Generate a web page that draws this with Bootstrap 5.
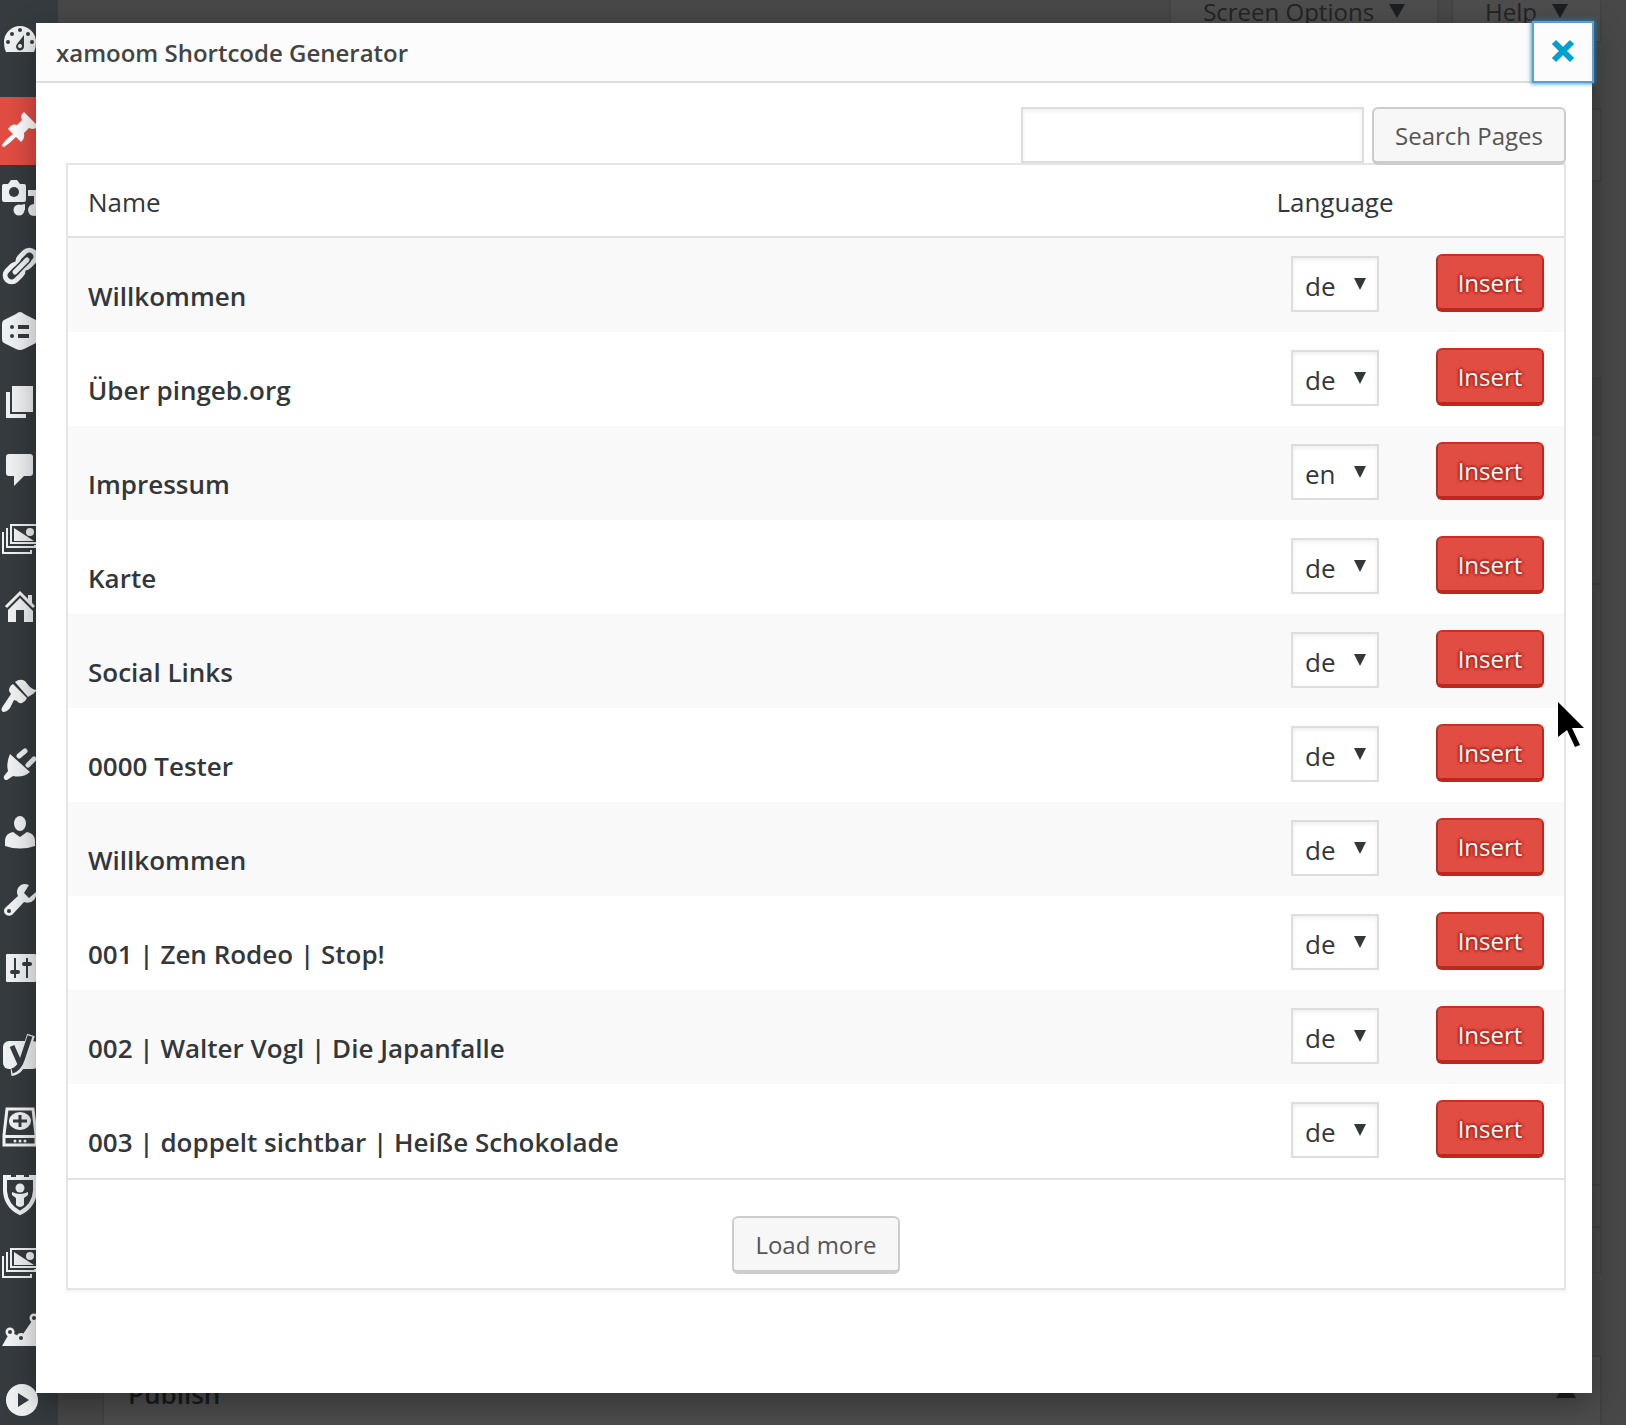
<!DOCTYPE html>
<html lang="en">
<head>
<meta charset="utf-8">
<meta name="viewport" content="width=device-width, initial-scale=1">
<title>xamoom Shortcode Generator</title>
<link href="https://cdn.jsdelivr.net/npm/bootstrap@5.3.0/dist/css/bootstrap.min.css" rel="stylesheet">
<style>
body{font-family:"Open Sans","Noto Sans",sans-serif;font-size:26px;line-height:36px;color:#32373c;background:#484848}
.app-shell{height:100vh}
/* admin menu */
.admin-menu{width:58px;background:#363b3f;padding-top:7px}
.menu-link{display:block;height:68px;padding:13px 0}
.menu-link.is-current{background:#e14d43}
.menu-link svg{display:block;width:40px;height:40px;overflow:visible;color:#f1f2f3;fill:currentColor}
.menu-link.is-current svg{color:#fff}
.menu-gap{margin-top:22px}
.cut{fill:#363b3f}
.ln{fill:none;stroke:currentColor}
.lncut{fill:none;stroke:#363b3f}
/* dimmed page */
.page-area{padding:0 24px 0 44px;color:#191b1d}
.meta-tab{height:43px;border:2px solid #444;border-top:0;background:#4d4d4d;color:#242424;font-size:24px;line-height:24px;padding:0 32px;display:flex;gap:15px;text-decoration:none}
.meta-tab svg{margin-top:4px}
.meta-links{gap:12px}
.dim-box{border:2px solid #434343;background:#4d4d4d}
.title-box{height:74px;margin-top:65px}
.editor-box{margin-top:195px;height:897px;background:#494949}
.editor-bar{height:57px;background:#454545}
.editor-tools{height:149px;border-bottom:2px solid #424242}
.editor-body{height:601px;border-bottom:2px solid #424242}
.editor-path{height:42px;border-bottom:2px solid #424242}
.publish-box{margin-top:81px;height:120px;padding:19px 24px}
.publish-box h2{font-size:26px;line-height:36px;font-weight:600}
/* dialog */
.dialog-pane{position:absolute;top:23px;left:36px;right:34px;background:#fff;box-shadow:0 10px 30px rgba(0,0,0,.35);padding-bottom:103px}
.dialog-head{height:60px;background:#fcfcfc;border-bottom:2px solid #ddd;padding-left:20px}
.dialog-head h1{font-size:24px;line-height:36px;font-weight:600;color:#444}
.close-btn{width:62px;height:62px;margin:-2px -2px 0 0;padding:0 0 2px;border:2px solid #5b9dd9;background:#fcfcfc;box-shadow:0 0 4px 1px rgba(30,140,190,.8)}
.close-btn svg{display:block;margin:0 auto}
.dialog-main{padding:24px 26px 0 30px}
.search-box{width:343px;height:56px;border:2px solid #ddd;border-radius:0;background:#fff;box-shadow:inset 0 2px 4px rgba(0,0,0,.07);padding:4px 10px;font-size:26px}
.wp-btn{height:58px;border:2px solid #ccc;border-bottom-width:4px;border-radius:6px;background:#f7f7f7;color:#555;font-size:24px;line-height:36px;padding:9px 21px 7px}
.insert-btn{width:108px;border-color:#d02c21 #ba281e #ba281e;background:#e14d43;color:#fff;padding:9px 0 7px;text-shadow:0 -2px 2px #ba281e,2px 0 2px #ba281e,0 2px 2px #ba281e,-2px 0 2px #ba281e}
.list-frame{border:2px solid #e5e5e5;box-shadow:0 2px 2px rgba(0,0,0,.04);margin-top:-2px}
.page-table{width:100%;table-layout:fixed;border-collapse:separate;border-spacing:0}
.page-table th{height:73px;padding:2px 20px 0;border-bottom:2px solid #e1e1e1;font-weight:400;vertical-align:middle}
.page-table td{height:94px;padding:16px 20px 0;vertical-align:top;font-weight:600}
.page-table td:first-child{padding-top:40px}
.page-table tbody tr:nth-child(odd){background:#f9f9f9}
.col-lang{width:160px}
.col-act{width:149px}
.lang-select{width:88px;height:56px;margin-top:2px;border:2px solid #ddd;appearance:none;color:#32373c;padding:4px 0 0 12px;font-size:26px;box-shadow:inset 0 2px 4px rgba(0,0,0,.07);background:#fff url("data:image/svg+xml,%3Csvg xmlns='http://www.w3.org/2000/svg' width='12' height='12'%3E%3Cpath d='M0 0h12L6 12z' fill='%2332373c'/%3E%3C/svg%3E") no-repeat right 11px top 20px}
.list-foot{border-top:2px solid #e1e1e1;padding:36px 0 14px}
.pointer-mark{position:absolute;right:6px;top:679px}
</style>
</head>
<body>
<div class="app-shell d-flex overflow-hidden position-relative">
<nav class="admin-menu flex-shrink-0" aria-label="Admin menu">
<a class="menu-link" href="#" aria-label="Dashboard"><svg viewBox="0 0 40 40"><path d="M4 22a16 16 0 0 1 32 0q0 6-2 10H6q-2-4-2-10z"/><g class="cut"><circle cx="20" cy="10" r="2"/><circle cx="12" cy="14" r="2"/><circle cx="28" cy="14" r="2"/><circle cx="8" cy="22" r="2"/><circle cx="32" cy="22" r="2"/><path d="M24 15v11a4 4 0 1 1-7-2z"/></g><circle cx="20" cy="26" r="2"/></svg></a>
<a class="menu-link is-current menu-gap" href="#" aria-label="Posts"><svg viewBox="0 0 40 40"><path d="M24 2q-3 2-3 5l1 3-5 5q-5-2-9 4l5 5Q5 30 2 35q0 2 2 2 6-4 12-10l5 5q4-3 3-9l5-5 3 1q4 0 6-3z"/></svg></a>
<a class="menu-link" href="#" aria-label="Media"><svg viewBox="0 0 40 40"><path d="M4 6h4l3-4h6l3 4h4q2 0 2 2v14q0 2-2 2H4q-2 0-2-2V8q0-2 2-2z"/><circle class="cut" cx="14" cy="14" r="5"/><path d="M28 12h14v20h-8V18h-6zM20 27l5-1v6h-5z"/><circle cx="19" cy="32" r="5.500"/><circle cx="34" cy="32" r="6"/></svg></a>
<a class="menu-link" href="#" aria-label="Links"><svg viewBox="0 0 40 40"><g class="ln"><rect stroke-width="5" x="4" y="20" width="20" height="13" rx="6.500" transform="rotate(-45 14.500 26.500)"/><rect stroke-width="5" x="17" y="7" width="20" height="13" rx="6.500" transform="rotate(-45 26.500 13.500)"/><path class="lncut" stroke-width="8" stroke-linecap="round" d="M15 26 27 14"/><path stroke-width="5" stroke-linecap="round" d="M15 26 27 14"/></g></svg></a>
<a class="menu-link" href="#" aria-label="Listings"><svg viewBox="0 0 40 40"><path d="M20-2q2 0 4 2l12 6q2 1 2 4v15q0 3-2 4l-12 6q-4 2-8 0L4 29q-2-1-2-4V10q0-3 2-4l12-6q2-2 4-2z"/><path class="cut" d="M18 11h11v4H18zM18 20h11v4H18z"/><circle class="cut" cx="12" cy="13" r="2"/><circle class="cut" cx="12" cy="22" r="2"/></svg></a>
<a class="menu-link" href="#" aria-label="Pages"><svg viewBox="0 0 40 40"><path d="M12 4h21v26H12zM6 10h4v22h16v4H6z"/></svg></a>
<a class="menu-link" href="#" aria-label="Comments"><svg viewBox="0 0 40 40"><path d="M9 4h21q3 0 3 3v16q0 3-3 3h-6L14 36V26H9q-3 0-3-3V7q0-3 3-3z"/></svg></a>
<a class="menu-link" href="#" aria-label="Gallery"><svg viewBox="0 0 40 40"><g id="gallery"><path class="ln" stroke-width="2" d="M11 7h28v18H11zM8 11H7v18h28v-2M4 15H3v20h28v-3"/><path d="M14 10 34 23H14z"/><circle cx="30" cy="14" r="4"/></g></svg></a>
<a class="menu-link" href="#" aria-label="Home"><svg viewBox="0 0 40 40"><path class="ln" stroke-width="3" d="M6 21 20 7l14 14"/><path d="M28 9h4v9l-4-4zM20 12l13 13v11h-9V24h-8v12H8V24z"/></svg></a>
<a class="menu-link menu-gap" href="#" aria-label="Appearance"><svg viewBox="0 0 40 40"><path d="M15 6q5-4 10-1l4 5q4 4 8 4-3 4-9 7zM13 8l14 14q-1 3-5 5-3 1-5-2l-3-1-4 8q-3 4-7 4-3-2 0-6l8-12-2-3q0-5 4-7z"/></svg></a>
<a class="menu-link" href="#" aria-label="Plugins"><svg viewBox="0 0 40 40"><path d="M10 10 30 28q-7 6-17 4l-6 4q-4 0-3-4l4-5q-2-8 2-17z"/><path class="ln" stroke-width="5" stroke-linecap="round" d="m19 12 6-5M28 21l6-6"/></svg></a>
<a class="menu-link" href="#" aria-label="Users"><svg viewBox="0 0 40 40"><ellipse cx="20" cy="11.500" rx="6" ry="7.500"/><path d="M5 34v-6q1-7 8-8l7 5 7-5q7 1 8 8v6q-15 5-30 0z"/></svg></a>
<a class="menu-link" href="#" aria-label="Tools"><svg viewBox="0 0 40 40"><path d="M29 5q-7-3-11 3-2 4 0 8L5 28q-2 3 0 6 3 3 7 1l12-13q6 2 10-2 3-4 2-8l-7 6-5-5z"/><circle class="cut" cx="9" cy="31" r="2"/></svg></a>
<a class="menu-link" href="#" aria-label="Settings"><svg viewBox="0 0 40 40"><rect x="6" y="6" width="30" height="28" rx="1"/><path class="lncut" stroke-width="2" d="M15 10v20M27 10v20"/><path class="lncut" stroke-width="4" stroke-linecap="round" d="M12 24h6M24 16h6"/></svg></a>
<a class="menu-link menu-gap" href="#" aria-label="SEO"><svg viewBox="0 0 40 40"><rect x="3" y="3" width="36" height="28" rx="6"/><path class="ln" stroke-width="8" d="M31-3 23 22q-3 11-12 12"/><path class="lncut" stroke-width="5" d="m12 8 8 18M30-2 22 22q-3 9-10 11"/></svg></a>
<a class="menu-link" href="#" aria-label="Backup"><svg viewBox="0 0 40 40"><path class="ln" stroke-width="3" d="M7 3h26l3 26v10H4V29z"/><path d="M4 29h32v3H4z"/><ellipse cx="20" cy="15" rx="11" ry="9"/><path class="lncut" stroke-width="3" d="M13 15h14M20 9v12"/><g><circle cx="15" cy="35" r="1.500"/><circle cx="20" cy="35" r="1.500"/><circle cx="25" cy="35" r="1.500"/></g></svg></a>
<a class="menu-link" href="#" aria-label="Security"><svg viewBox="0 0 40 40"><path class="ln" stroke-width="4" d="M5 3v14q1 15 15 22 14-7 15-22V3"/><path d="M3 1h8v2h5V1h8v2h5V1h8v5H3z"/><circle cx="20" cy="14" r="4.500"/><path d="M12 18q8 4 16 0v3l-4 3v7q-4 4-8 0v-7l-4-3z"/></svg></a>
<a class="menu-link" href="#" aria-label="Media gallery"><svg viewBox="0 0 40 40"><use href="#gallery"/></svg></a>
<a class="menu-link" href="#" aria-label="Statistics"><svg viewBox="0 0 40 40"><path d="m2 36 8-14 11 5 13-19 6 10v18z"/><circle cx="10" cy="22" r="4.500"/><circle cx="21" cy="27" r="4"/><circle cx="34" cy="8" r="4.500"/><g class="cut"><circle cx="10" cy="22" r="2"/><circle cx="21" cy="28" r="2"/><circle cx="34" cy="8" r="2"/></g></svg></a>
<a class="menu-link" href="#" aria-label="Collapse menu"><svg viewBox="0 0 40 40"><circle cx="22" cy="22" r="16"/><path class="cut" d="m18 15 11 7-11 7z"/></svg></a>
</nav>
<main class="page-area flex-grow-1">
<div class="meta-links d-flex justify-content-end">
<a class="meta-tab" href="#">Screen Options <svg width="16" height="14"><path d="M0 0h16L8 14z" fill="#1c1e20"/></svg></a>
<a class="meta-tab" href="#">Help <svg width="16" height="14"><path d="M0 0h16L8 14z" fill="#1c1e20"/></svg></a>
</div>
<div class="dim-box title-box"></div>
<div class="dim-box editor-box"><div class="editor-bar"></div><div class="editor-tools"></div><div class="editor-body"></div><div class="editor-path"></div></div>
<section class="dim-box publish-box d-flex justify-content-between"><h2 class="m-0">Publish</h2><svg width="20" height="22"><path d="M10 6 20 22H0z" fill="#1c1e20"/></svg></section>
</main>
<section class="dialog-pane" role="dialog" aria-labelledby="dialogTitle">
<header class="dialog-head d-flex justify-content-between">
<h1 class="m-0 pt-2 mt-1" id="dialogTitle">xamoom Shortcode Generator</h1>
<button class="close-btn" type="button" aria-label="Close"><svg width="24" height="24"><path d="m3 3 18 18M21 3 3 21" stroke="#00a0d2" stroke-width="6" fill="none"/></svg></button>
</header>
<div class="dialog-main">
<form class="d-flex justify-content-end gap-2 position-relative"><input class="search-box" type="search" aria-label="Search pages"><button class="wp-btn" type="button">Search Pages</button></form>
<div class="list-frame">
<table class="page-table">
<thead><tr><th scope="col">Name</th><th class="col-lang text-center" scope="col">Language</th><th class="col-act" aria-label="Action"></th></tr></thead>
<tbody>
<tr><td>Willkommen</td><td class="text-center"><select class="lang-select" aria-label="Language"><option>de</option><option>en</option></select></td><td class="text-end"><button class="wp-btn insert-btn" type="button">Insert</button></td></tr>
<tr><td>Über pingeb.org</td><td class="text-center"><select class="lang-select" aria-label="Language"><option>de</option><option>en</option></select></td><td class="text-end"><button class="wp-btn insert-btn" type="button">Insert</button></td></tr>
<tr><td>Impressum</td><td class="text-center"><select class="lang-select" aria-label="Language"><option>en</option><option>de</option></select></td><td class="text-end"><button class="wp-btn insert-btn" type="button">Insert</button></td></tr>
<tr><td>Karte</td><td class="text-center"><select class="lang-select" aria-label="Language"><option>de</option><option>en</option></select></td><td class="text-end"><button class="wp-btn insert-btn" type="button">Insert</button></td></tr>
<tr><td>Social Links</td><td class="text-center"><select class="lang-select" aria-label="Language"><option>de</option><option>en</option></select></td><td class="text-end"><button class="wp-btn insert-btn" type="button">Insert</button></td></tr>
<tr><td>0000 Tester</td><td class="text-center"><select class="lang-select" aria-label="Language"><option>de</option><option>en</option></select></td><td class="text-end"><button class="wp-btn insert-btn" type="button">Insert</button></td></tr>
<tr><td>Willkommen</td><td class="text-center"><select class="lang-select" aria-label="Language"><option>de</option><option>en</option></select></td><td class="text-end"><button class="wp-btn insert-btn" type="button">Insert</button></td></tr>
<tr><td>001 | Zen Rodeo | Stop!</td><td class="text-center"><select class="lang-select" aria-label="Language"><option>de</option><option>en</option></select></td><td class="text-end"><button class="wp-btn insert-btn" type="button">Insert</button></td></tr>
<tr><td>002 | Walter Vogl | Die Japanfalle</td><td class="text-center"><select class="lang-select" aria-label="Language"><option>de</option><option>en</option></select></td><td class="text-end"><button class="wp-btn insert-btn" type="button">Insert</button></td></tr>
<tr><td>003 | doppelt sichtbar | Heiße Schokolade</td><td class="text-center"><select class="lang-select" aria-label="Language"><option>de</option><option>en</option></select></td><td class="text-end"><button class="wp-btn insert-btn" type="button">Insert</button></td></tr>
</tbody>
</table>
<div class="list-foot text-center"><button class="wp-btn d-block mx-auto" type="button">Load more</button></div>
</div>
</div>
<svg class="pointer-mark" width="28" height="46" aria-hidden="true"><path d="M0 0 26 26H14l8 17-5 2L9 28 0 35z" fill="#000"/></svg>
</section>
</div>
<script src="https://cdn.jsdelivr.net/npm/bootstrap@5.3.0/dist/js/bootstrap.bundle.min.js"></script>
</body>
</html>
